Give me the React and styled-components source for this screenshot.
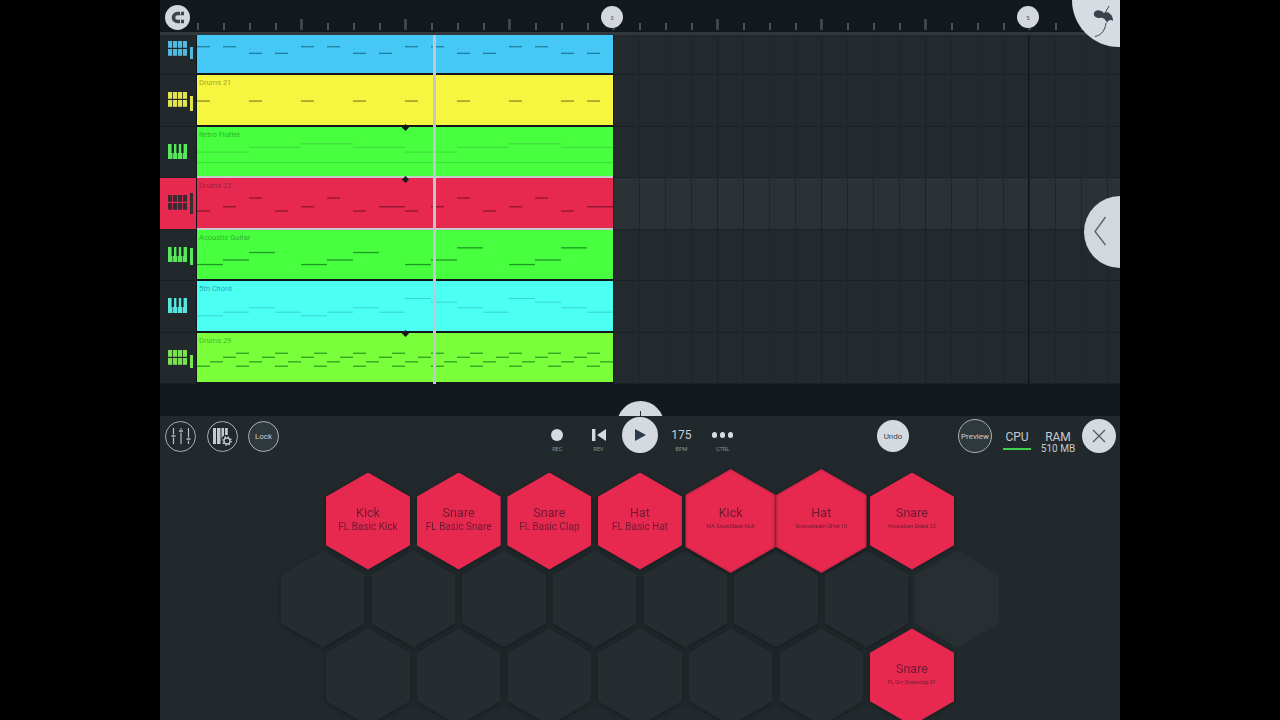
import styled, { createGlobalStyle } from "styled-components";

const STEP = 26;

const GlobalStyle = createGlobalStyle`
  html, body {
    margin: 0;
    height: 100%;
    background: #000;
    font-family: Roboto, "Liberation Sans", sans-serif;
  }
`;

const Frame = styled.div`
  position: relative;
  width: 960px;
  height: 720px;
  margin: 0 auto;
  overflow: hidden;
  display: flex;
  flex-direction: column;
  background: #22292c;
`;

/* ---------- ruler ---------- */

const Ruler = styled.div`
  flex: none;
  height: 32px;
  padding-left: 37px;
  display: flex;
  background: #13191c;
  border-bottom: 3px solid #31383b;
`;

const TickCell = styled.div`
  flex: none;
  width: ${STEP}px;
  height: 30px;
  display: flex;
  align-items: flex-end;
`;

const Tick = styled.span`
  display: block;
  margin-left: ${(p) => (p.$major ? "-1px" : "0")};
  width: ${(p) => (p.$major ? "3px" : "1.5px")};
  height: ${(p) => (p.$major ? "11px" : "7px")};
  background: ${(p) => (p.$major ? "#3d4549" : "#4a5256")};
`;

const MagnetButton = styled.div`
  position: absolute;
  left: 4.5px;
  top: 4.5px;
  width: 25px;
  height: 25px;
  border-radius: 50%;
  background: #d3d8dc;
  display: flex;
  align-items: center;
  justify-content: center;
`;

const BarBadge = styled.div`
  position: absolute;
  left: ${(p) => p.$left}px;
  top: 6px;
  width: 22px;
  height: 22px;
  border-radius: 50%;
  background: #d3d8de;
  color: #4a5358;
  font-size: 6px;
  display: flex;
  align-items: center;
  justify-content: center;
`;

const LogoDisc = styled.div`
  position: absolute;
  left: 912px;
  top: -47px;
  width: 94px;
  height: 94px;
  border-radius: 50%;
  background: #d7dce3;
`;

const SideArrow = styled.div`
  position: absolute;
  left: 924px;
  top: 196px;
  width: 72px;
  height: 72px;
  border-radius: 50%;
  background: #d3d8de;
`;

/* ---------- tracks ---------- */

const Tracks = styled.div`
  position: relative;
  flex: none;
  display: flex;
  flex-direction: column;
`;

const Row = styled.div`
  flex: none;
  height: ${(p) => p.$height}px;
  display: flex;
`;

const Side = styled.div`
  flex: none;
  width: 37px;
  box-sizing: border-box;
  padding-left: 8px;
  display: flex;
  align-items: flex-end;
  gap: 2.5px;
  background: ${(p) => (p.$selected ? "#e8294f" : "#22292c")};
  border-right: 1px solid #11161a;
  border-bottom: 1px solid #1a2023;

  svg {
    margin-bottom: 18.5px;
  }
`;

const Meter = styled.span`
  margin-bottom: 15px;
  width: 3.5px;
  height: ${(p) => p.$level}px;
  background: ${(p) => p.$color};
`;

const Clip = styled.div`
  position: relative;
  flex: none;
  width: 416px;
  box-sizing: border-box;
  padding: 3px 0 0 2px;
  background: ${(p) => p.$color};
  background-clip: padding-box;
  border-bottom: 2px solid ${(p) => p.$edge};
  color: ${(p) => p.$ink};
  font-size: 7.5px;
  line-height: 9px;
`;

const NoteLayer = styled.svg`
  position: absolute;
  left: 0;
  top: 0;
`;

const Marker = styled.span`
  position: absolute;
  left: 205.5px;
  top: -1.5px;
  width: 5px;
  height: 5px;
  background: #14191b;
  transform: rotate(45deg);
`;

const Lanes = styled.div`
  flex: 1;
  background-color: ${(p) => (p.$selected ? "#2b3235" : "#23292c")};
  background-image:
    linear-gradient(90deg, #101518 1.5px, transparent 1.5px),
    linear-gradient(90deg, #1b2124 1px, transparent 1px),
    linear-gradient(90deg, #1f2629 1px, transparent 1px);
  background-size: 832px 100%, ${STEP * 4}px 100%, ${STEP}px 100%;
  background-position: 414px 0, -1px 0, -1px 0;
  border-left: 1px solid #14191b;
  border-bottom: 1px solid #1b2124;
`;

const Playhead = styled.div`
  position: absolute;
  left: 273px;
  top: 0;
  bottom: 0;
  width: 2.5px;
  background: #bfc8ce;
`;

/* ---------- band and toolbar ---------- */

const Band = styled.div`
  position: relative;
  flex: none;
  height: 32px;
  background: #13191c;
  overflow: hidden;
`;

const PullTab = styled.div`
  position: absolute;
  left: 456.5px;
  top: 17px;
  width: 47px;
  height: 47px;
  border-radius: 50%;
  background: #d3d8de;

  &::after {
    content: "";
    position: absolute;
    left: 23px;
    top: 10px;
    width: 1px;
    height: 6px;
    background: #2a3135;
  }
`;

const Toolbar = styled.div`
  flex: none;
  height: 40px;
  display: grid;
  grid-template-columns: 376.5px 207px 1fr;
  align-items: center;
`;

const ToolGroup = styled.div`
  padding-left: 5px;
  display: flex;
  gap: 10.5px;
`;

const RoundButton = styled.div`
  flex: none;
  width: ${(p) => p.$size || 31}px;
  height: ${(p) => p.$size || 31}px;
  margin-right: ${(p) => p.$after || 0}px;
  box-sizing: border-box;
  border-radius: 50%;
  border: ${(p) => (p.$solid ? "none" : "1px solid #a7b0b4")};
  background: ${(p) => (p.$solid ? "#d5dae0" : p.$fill || "transparent")};
  color: ${(p) => (p.$solid ? "#3b454b" : "#c6cdd1")};
  font-size: 8px;
  display: flex;
  align-items: center;
  justify-content: center;
`;

const Transport = styled.div`
  display: flex;
  align-self: start;
  padding-top: 10px;
`;

const TransportItem = styled.div`
  width: 41.4px;
  display: flex;
  flex-direction: column;
  align-items: center;
`;

const TransportSlot = styled.div`
  height: 18px;
  display: flex;
  align-items: center;
  justify-content: center;
  color: #c9d0d5;
  font-size: 12px;
`;

const TransportLabel = styled.div`
  margin-top: 1px;
  height: 8px;
  line-height: 8px;
  font-size: 5.5px;
  color: #8b9499;
`;

const RecDot = styled.span`
  width: 12.5px;
  height: 12.5px;
  border-radius: 50%;
  background: #d5dbe0;
`;

const PlayDisc = styled.div`
  flex: none;
  width: 36px;
  height: 36px;
  border-radius: 50%;
  background: #d5dae1;
  display: flex;
  align-items: center;
  justify-content: center;
`;

const PlayGlyph = styled.svg`
  margin-left: 2px;
`;

const Dots = styled.div`
  display: flex;
  gap: 2.8px;

  span {
    width: 5.2px;
    height: 5.2px;
    border-radius: 50%;
    background: #d5dbe0;
  }
`;

const StatusGroup = styled.div`
  padding-left: 133.5px;
  display: flex;
  align-items: center;
`;

const Meters = styled.div`
  margin: 0 3px 0 8px;
  padding-top: 12px;
  display: flex;
  gap: 3px;
  align-self: flex-start;
  color: #c4ccd0;
  font-size: 12px;
  line-height: 14px;
`;

const Stat = styled.div`
  width: ${(p) => p.$width}px;
  display: flex;
  flex-direction: column;
  align-items: center;
`;

const CpuBar = styled.span`
  margin-top: 4px;
  width: 28px;
  height: 2px;
  background: #3ed24c;
`;

const StatValue = styled.span`
  font-size: 10px;
  line-height: 10px;
`;

/* ---------- pads ---------- */

const PadArea = styled.div`
  flex: 1;
  padding-top: 16.5px;
  display: flex;
  flex-direction: column;
  align-items: center;
`;

const PadRow = styled.div`
  flex: none;
  display: flex;
  gap: 6.67px;
  margin-top: ${(p) => (p.$first ? "0" : "-19px")};
`;

const PadShadow = styled.div`
  flex: none;
  position: relative;
  z-index: ${(p) => (p.$active ? 3 : p.$lit ? 2 : 1)};
  width: ${(p) => (p.$active ? "90.4px" : "84px")};
  height: ${(p) => (p.$active ? "104px" : "97px")};
  margin: ${(p) => (p.$active ? "-3.5px -3.2px" : "0")};
  filter: ${(p) => (p.$faint ? "none" : "drop-shadow(0 1px 2px rgba(10, 14, 16, 0.55))")};
`;

const Hex = styled.div`
  position: relative;
  width: 100%;
  height: 100%;
  clip-path: polygon(50% 0, 100% 25%, 100% 75%, 50% 100%, 0 75%, 0 25%);
  background: ${(p) => (p.$active ? "#d42649" : p.$lit ? "#e8294f" : p.$faint ? "#282f32" : "#262d30")};
  color: #6e1934;
  display: flex;
  flex-direction: column;
  align-items: center;
  justify-content: center;
  padding-bottom: 3px;
  box-sizing: border-box;

  &::before {
    content: "";
    display: ${(p) => (p.$active ? "block" : "none")};
    position: absolute;
    inset: 2px;
    clip-path: polygon(50% 0, 100% 25%, 100% 75%, 50% 100%, 0 75%, 0 25%);
    background: #e8294f;
  }
`;

const PadTitle = styled.div`
  position: relative;
  font-size: 12.6px;
  line-height: 12px;
  margin-bottom: 1px;
  top: -0.5px;
`;

const PadName = styled.div`
  position: relative;
  height: 11px;
  line-height: 11px;
  white-space: nowrap;
  font-size: ${(p) => (p.$tiny ? "5.4px" : "10px")};
`;

/* ---------- drawings ---------- */

function PadsIcon({ color }) {
  const cells = [];
  for (let r = 0; r < 2; r++) {
    for (let c = 0; c < 4; c++) {
      cells.push(<rect key={`${r}${c}`} x={c * 5} y={r * 8} width="4.2" height="6.8" fill={color} />);
    }
  }
  return (
    <svg width="19.2" height="15" viewBox="0 0 19.2 15">
      {cells}
    </svg>
  );
}

function KeysIcon({ color, black }) {
  return (
    <svg width="19.2" height="15" viewBox="0 0 19.2 15">
      <rect width="19.2" height="15" fill={color} />
      {[4.8, 9.6, 14.4].map((x) => (
        <rect key={x} x={x - 1.2} y="0" width="2.4" height="9" fill={black} />
      ))}
      {[4.8, 9.6, 14.4].map((x) => (
        <rect key={x} x={x - 0.3} y="9" width="0.6" height="6" fill={black} />
      ))}
    </svg>
  );
}

function MagnetIcon() {
  return (
    <svg width="17" height="17" viewBox="0 0 17 17">
      <path d="M15 4.5H8.5a4 4 0 0 0 0 8H15" fill="none" stroke="#3b464b" strokeWidth="3.6" />
      <path d="M11.5 1.5v4M11.5 10.5v5" stroke="#d3d8dc" strokeWidth="1" />
    </svg>
  );
}

function FlLogo() {
  return (
    <svg width="94" height="94" viewBox="1072 -47 94 94">
      <path
        d="M1094 13C1096 9 1101 10 1104 13C1106 12 1109 12 1110 14C1112 15 1113 18 1113 21C1111 19 1108 20 1107 23C1106 20 1103 17 1100 18C1097 18 1093 17 1094 13Z"
        fill="#3a444c"
      />
      <path d="M1105 13L1109 6M1106 23C1105 30 1102 35 1095 36.5" fill="none" stroke="#3a444c" strokeWidth="1" />
    </svg>
  );
}

function MixerIcon() {
  return (
    <svg width="20" height="18" viewBox="0 0 20 18" fill="none" stroke="#b9c1c5">
      <path d="M2.5 1v6.5M2.5 10.5V17M10 1v1.5M10 5.5V17M17.5 1v9.5M17.5 13.5V17" strokeWidth="1.2" />
      <path d="M.5 9h4M8 4h4M15.5 12h4" strokeWidth="1.4" />
    </svg>
  );
}

function PianoGearIcon() {
  return (
    <svg width="20" height="19" viewBox="0 0 20 19">
      <path
        d="M1 1h3v16H1zM5 1h3.5v16H5zM9.5 1H12v7.5a6 6 0 0 0-2.5 6V17H9.5zM13 1h2.8v7H13z"
        fill="#c4cbcf"
      />
      <circle cx="15" cy="14" r="3" fill="none" stroke="#c4cbcf" strokeWidth="1.3" />
      <circle cx="15" cy="14" r="4.2" fill="none" stroke="#c4cbcf" strokeWidth="1.3" strokeDasharray="1.6 1.7" />
    </svg>
  );
}

function RevIcon() {
  return (
    <svg width="14" height="12" viewBox="0 0 14 12" fill="#d5dbe0">
      <rect width="3.4" height="12" />
      <path d="M14 0v12L5 6z" />
    </svg>
  );
}

function PlayIcon() {
  return (
    <PlayGlyph width="12" height="12" viewBox="0 0 12 12">
      <path d="M0 0L11 6L0 12z" fill="#2c3a4c" />
    </PlayGlyph>
  );
}

/* ---------- data ---------- */

const steps = (n, fn) => Array.from({ length: n }, (_, i) => fn(i)).filter(Boolean);

const cyanY = [35, 31.3, 27, 31.3, 35, 31.3, 27, 31.3, 17.7, 21.3, 27, 31.3, 17.7, 21.3, 27, 31.3];
const guitarY = [34.5, 30, 22.5, null, 34.5, 30, 22.5, null, 34.5, 30, 17.8, null, 34.5, 30, 17.8, null];
const flutter = [25.2, 20.5, 17, 20.5, 25.2, 20.5, 17, 20.5];
const limeY = [33.2, 28.8, 24.2];

const limeNotes = [];
for (let i = 0; i < 32; i++) {
  limeNotes.push([i / 2, 0.5, limeY[i % 3]]);
  if (i % 3 === 0 && i > 0) limeNotes.push([i / 2, 0.5, 20.2]);
}

const redNotes = [
  [0, 0.5, 33], [1, 0.5, 28.7], [2, 0.5, 20], [3, 0.5, 33], [4, 0.5, 28.7], [5, 0.5, 20], [6, 0.5, 33], [7, 1, 28.7],
  [8, 0.5, 33], [9, 0.5, 28.7], [10, 0.5, 20], [11, 0.5, 33], [12, 0.5, 28.7], [13, 0.5, 20], [14, 0.5, 33], [15, 1, 28.7],
];

const tracks = [
  {
    height: 40,
    icon: "pads",
    color: "#45c8f5",
    iconColor: "#4fb9de",
    ink: "#2a86a8",
    note: "#1f7f9f",
    level: 12.5,
    edge: "#10161a",
    notes: steps(16, (i) => [i, 0.5, i % 4 < 2 ? 11.7 : 18.3]),
  },
  {
    height: 51.5,
    name: "Drums 21",
    icon: "pads",
    color: "#f6f53f",
    iconColor: "#e5e34a",
    ink: "#aaa82c",
    note: "#8c8a27",
    level: 15,
    edge: "#10161a",
    notes: [0, 2, 4, 6, 8, 10, 12, 14, 15].map((i) => [i, 0.5, 26]),
  },
  {
    height: 51.5,
    name: "Retro Flutter",
    icon: "keys",
    color: "#47ff3f",
    iconColor: "#56e858",
    ink: "#2bb52d",
    note: "#3fd63b",
    thin: true,
    edge: "#c6cbce",
    marker: true,
    notes: [...flutter.map((y, i) => [i * 2, 2, y]), [0, 16, 35.8]],
  },
  {
    height: 51.5,
    name: "Drums 23",
    icon: "pads",
    color: "#e8294f",
    iconColor: "#3c2a33",
    ink: "#a32040",
    note: "#8c1830",
    level: 21,
    meterColor: "#3c2a33",
    edge: "#c6cbce",
    selected: true,
    marker: true,
    notes: redNotes,
  },
  {
    height: 51.5,
    name: "Acoustic Guitar",
    icon: "keys",
    color: "#47ff3f",
    iconColor: "#56e858",
    ink: "#2bb52d",
    note: "#1f9a25",
    level: 17,
    edge: "#10161a",
    notes: steps(16, (i) => guitarY[i] !== null && [i, 1, guitarY[i]]),
  },
  {
    height: 51.5,
    name: "5th Chord",
    icon: "keys",
    color: "#4bfff2",
    iconColor: "#56e6df",
    ink: "#24aeb0",
    note: "#36cfca",
    thin: true,
    edge: "#10161a",
    notes: cyanY.map((y, i) => [i, 1, y]),
  },
  {
    height: 51.5,
    name: "Drums 29",
    icon: "pads",
    color: "#7aff3a",
    iconColor: "#78e44a",
    ink: "#46b92a",
    note: "#2f9f27",
    level: 13,
    edge: "#10161a",
    marker: true,
    notes: limeNotes,
  },
];

const topPads = [
  { title: "Kick", name: "FL Basic Kick" },
  { title: "Snare", name: "FL Basic Snare" },
  { title: "Snare", name: "FL Basic Clap" },
  { title: "Hat", name: "FL Basic Hat" },
  { title: "Kick", name: "MA SnowSteps Kick", tiny: true, active: true },
  { title: "Hat", name: "Downstream OHat 10", tiny: true, active: true },
  { title: "Snare", name: "HouseGen Snare 23", tiny: true },
];

const bottomPads = [{}, {}, {}, {}, {}, {}, { title: "Snare", name: "FL Grv Snareclap 01", tiny: true }];

function Pad({ pad = {}, faint }) {
  const lit = Boolean(pad.title);
  return (
    <PadShadow $active={pad.active} $lit={lit} $faint={faint}>
      <Hex $lit={lit} $faint={faint} $active={pad.active}>
        {lit && <PadTitle>{pad.title}</PadTitle>}
        {lit && <PadName $tiny={pad.tiny}>{pad.name}</PadName>}
      </Hex>
    </PadShadow>
  );
}

function Track({ track }) {
  return (
    <Row $height={track.height}>
      <Side $selected={track.selected}>
        {track.icon === "pads" ? (
          <PadsIcon color={track.iconColor} />
        ) : (
          <KeysIcon color={track.iconColor} black="#1f2629" />
        )}
        <Meter $level={track.level || 0} $color={track.meterColor || track.iconColor} />
      </Side>
      <Clip $color={track.color} $ink={track.ink} $edge={track.edge}>
        <NoteLayer width="416" height={track.height - 2}>
          {track.notes.map(([start, len, y], i) => (
            <rect
              key={i}
              x={start * STEP}
              y={y - 0.6}
              width={len * STEP}
              height={track.thin ? 0.9 : 1.3}
              fill={track.note}
            />
          ))}
        </NoteLayer>
        {track.name}
        {track.marker && <Marker />}
      </Clip>
      <Lanes $selected={track.selected} />
    </Row>
  );
}

export default function App() {
  return (
    <Frame>
      <GlobalStyle />
      <Ruler>
        {Array.from({ length: 36 }, (_, i) => (
          <TickCell key={i}>
            <Tick $major={i > 0 && i % 4 === 0} />
          </TickCell>
        ))}
      </Ruler>
      <Tracks>
        {tracks.map((track, i) => (
          <Track key={i} track={track} />
        ))}
        <Playhead />
      </Tracks>
      <Band>
        <PullTab />
      </Band>
      <Toolbar>
        <ToolGroup>
          <RoundButton>
            <MixerIcon />
          </RoundButton>
          <RoundButton>
            <PianoGearIcon />
          </RoundButton>
          <RoundButton $fill="#2f383b">Lock</RoundButton>
        </ToolGroup>
        <Transport>
          <TransportItem>
            <TransportSlot>
              <RecDot />
            </TransportSlot>
            <TransportLabel>REC</TransportLabel>
          </TransportItem>
          <TransportItem>
            <TransportSlot>
              <RevIcon />
            </TransportSlot>
            <TransportLabel>REV</TransportLabel>
          </TransportItem>
          <TransportItem>
            <TransportSlot>
              <PlayDisc>
                <PlayIcon />
              </PlayDisc>
            </TransportSlot>
          </TransportItem>
          <TransportItem>
            <TransportSlot>175</TransportSlot>
            <TransportLabel>BPM</TransportLabel>
          </TransportItem>
          <TransportItem>
            <TransportSlot>
              <Dots>
                <span />
                <span />
                <span />
              </Dots>
            </TransportSlot>
            <TransportLabel>CTRL</TransportLabel>
          </TransportItem>
        </Transport>
        <StatusGroup>
          <RoundButton $solid $size={32} $after={49}>Undo</RoundButton>
          <RoundButton $size={34} $fill="#2f383b">Preview</RoundButton>
          <Meters>
            <Stat $width={34}>
              CPU
              <CpuBar />
            </Stat>
            <Stat $width={42}>
              RAM
              <StatValue>510 MB</StatValue>
            </Stat>
          </Meters>
          <RoundButton $solid $size={34}>
            <svg width="14" height="14" viewBox="0 0 14 14">
              <path d="M1 1L13 13M13 1L1 13" stroke="#4d585f" strokeWidth="1.2" />
            </svg>
          </RoundButton>
        </StatusGroup>
      </Toolbar>
      <PadArea>
        <PadRow $first>
          {topPads.map((pad, i) => (
            <Pad key={i} pad={pad} />
          ))}
        </PadRow>
        <PadRow>
          {Array.from({ length: 8 }, (_, i) => (
            <Pad key={i} faint={i === 7} />
          ))}
        </PadRow>
        <PadRow>
          {bottomPads.map((pad, i) => (
            <Pad key={i} pad={pad} />
          ))}
        </PadRow>
      </PadArea>

      <MagnetButton>
        <MagnetIcon />
      </MagnetButton>
      <BarBadge $left={441}>3</BarBadge>
      <BarBadge $left={857}>5</BarBadge>
      <LogoDisc>
        <FlLogo />
      </LogoDisc>
      <SideArrow>
        <svg width="72" height="72" viewBox="0 0 72 72">
          <path d="M21.5 21L11 35.5L21.5 49" fill="none" stroke="#5b6770" strokeWidth="1.4" />
        </svg>
      </SideArrow>
    </Frame>
  );
}
